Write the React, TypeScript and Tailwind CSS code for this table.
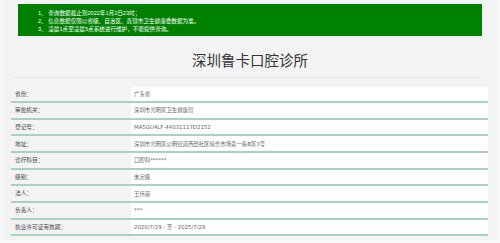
import React from 'react';

const rows: [string, string][] = [
  ['省份：', '广东省'],
  ['审批机关：', '深圳市光明区卫生健康局'],
  ['登记号：', 'MA5GU4LF-44031117D2152'],
  ['地址：', '深圳市光明区公明街道西田社区综合市场第一栋B区3号'],
  ['诊疗科目：', '口腔科******'],
  ['级别：', '未定级'],
  ['法人：', '王伟丽'],
  ['负责人：', '***'],
  ['执业许可证有效期：', '2020/7/29 - 至 - 2025/7/28'],
];

const notices = [
  '1、 查询数据截止到2022年1月2日23时；',
  '2、 信息数据仅限以省级、自治区、直辖市卫生健康委数据为准。',
  '3、 凌晨1点至凌晨5点系统进行维护，不能提供查询。',
];

export default function App() {
  return (
    <div className="w-[500px] h-[243px] overflow-hidden bg-[#f8f8f8] font-['Liberation_Sans','Noto_Sans_CJK_SC',sans-serif]">
      <div className="mx-[3px] h-[240px] bg-[#f3f3f3] pt-[4px]">
        {/* notice box */}
        <div className="ml-[15px] mr-[15px] h-[32px] bg-[#008000] pl-[20px] pt-[5px] text-[5.6px] leading-[8px] text-white">
          {notices.map((n) => (
            <div key={n}>{n}</div>
          ))}
        </div>

        {/* title */}
        <div className="pt-[15px] pb-[6px] text-center text-[14.5px] leading-[20px] text-[#333]">
          深圳鲁卡口腔诊所
        </div>
        <div className="ml-[10px] mr-[16px] h-px bg-[#e6e6e6]" />

        {/* detail table */}
        <div className="ml-[8px] mr-[9px] mt-[8.5px]">
          {rows.map(([label, value]) => (
            <div
              key={label}
              className="flex h-[16.67px] border-b-2 border-[#a6d3bb]"
            >
              <div className="flex w-[120px] items-center pl-[4px] text-[5.7px] text-[#444]">{label}</div>
              <div className="flex flex-1 items-center bg-white pl-[3px] font-['DejaVu_Sans','Noto_Sans_CJK_SC',sans-serif] text-[5.4px] text-[#666]">
                {value}
              </div>
            </div>
          ))}
        </div>
      </div>
    </div>
  );
}
